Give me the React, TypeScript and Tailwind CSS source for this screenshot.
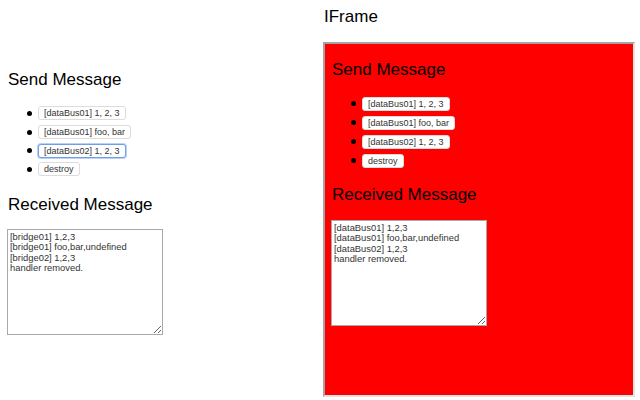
import React from "react";

const items = [
  { label: "[dataBus01] 1, 2, 3" },
  { label: "[dataBus01] foo, bar" },
  { label: "[dataBus02] 1, 2, 3" },
  { label: "destroy" },
];

function Btn({ label, focused }: { label: string; focused?: boolean }) {
  return (
    <button
      className={
        "h-[14px] px-[5px] rounded-[3px] bg-white text-[9px] leading-[12px] text-[#333] whitespace-nowrap " +
        (focused
          ? "border border-[#6f9fe6] shadow-[0_0_0_1px_#b9d2f5]"
          : "border border-[#dcdcdc]")
      }
      style={{ fontFamily: '"Liberation Sans", Arial, sans-serif' }}
    >
      {label}
    </button>
  );
}

function Panel({
  lines,
  focusIndex,
  pitch,
  gapA,
  gapB,
  gapC,
}: {
  lines: string[];
  focusIndex?: number;
  pitch: string;
  gapA: string;
  gapB: string;
  gapC: string;
}) {
  return (
    <div className="flex flex-col">
      <h2 className="text-[17px] leading-5 text-black pl-px">Send Message</h2>
      <ul className={"flex flex-col " + gapA}>
        {items.map((it, i) => (
          <li key={i} className={"flex items-center " + pitch}>
            <span className="w-[20px] shrink-0" />
            <span className="w-[5px] h-[5px] rounded-full bg-black shrink-0" />
            <span className="w-[6px] shrink-0" />
            <Btn label={it.label} focused={focusIndex === i} />
          </li>
        ))}
      </ul>
      <h2 className={"text-[17px] leading-5 text-black pl-px " + gapB}>Received Message</h2>
      <textarea
        readOnly
        defaultValue={lines.join("\n")}
        className={
          "w-[156px] h-[106px] bg-white border border-[#a9a9a9] px-[2px] py-[2px] text-[9.4px] leading-[10.4px] text-[#333] outline-none " +
          gapC
        }
        style={{ fontFamily: '"Liberation Sans", Arial, sans-serif' }}
      />
    </div>
  );
}

export default function App() {
  return (
    <div
      className="w-[640px] h-[400px] bg-white flex overflow-hidden"
      style={{ fontFamily: '"Liberation Sans", Arial, sans-serif' }}
    >
      <div className="w-[316px] pl-[7px] pt-[70px]">
        <Panel
          pitch="h-[18.7px]"
          focusIndex={2}
          gapA="mt-[14px]"
          gapB="mt-[16px]"
          gapC="mt-[14px]"
          lines={[
            "[bridge01] 1,2,3",
            "[bridge01] foo,bar,undefined",
            "[bridge02] 1,2,3",
            "handler removed.",
          ]}
        />
      </div>
      <div className="flex flex-col pl-[7px] pt-[7px]">
        <h2 className="text-[17px] leading-5 text-black pl-px">IFrame</h2>
        <div className="mt-[15px] w-[312px] h-[355px] bg-[#ff0000] border-2 border-t-[#a3a3a3] border-l-[#a3a3a3] border-b-[#e3e3e3] border-r-[#e3e3e3] pl-[6px] pt-[16px]">
          <Panel
            pitch="h-[19px]"
            gapA="mt-[14px]"
            gapB="mt-[15px]"
            gapC="mt-[15px]"
            lines={[
              "[dataBus01] 1,2,3",
              "[dataBus01] foo,bar,undefined",
              "[dataBus02] 1,2,3",
              "handler removed.",
            ]}
          />
        </div>
      </div>
    </div>
  );
}
